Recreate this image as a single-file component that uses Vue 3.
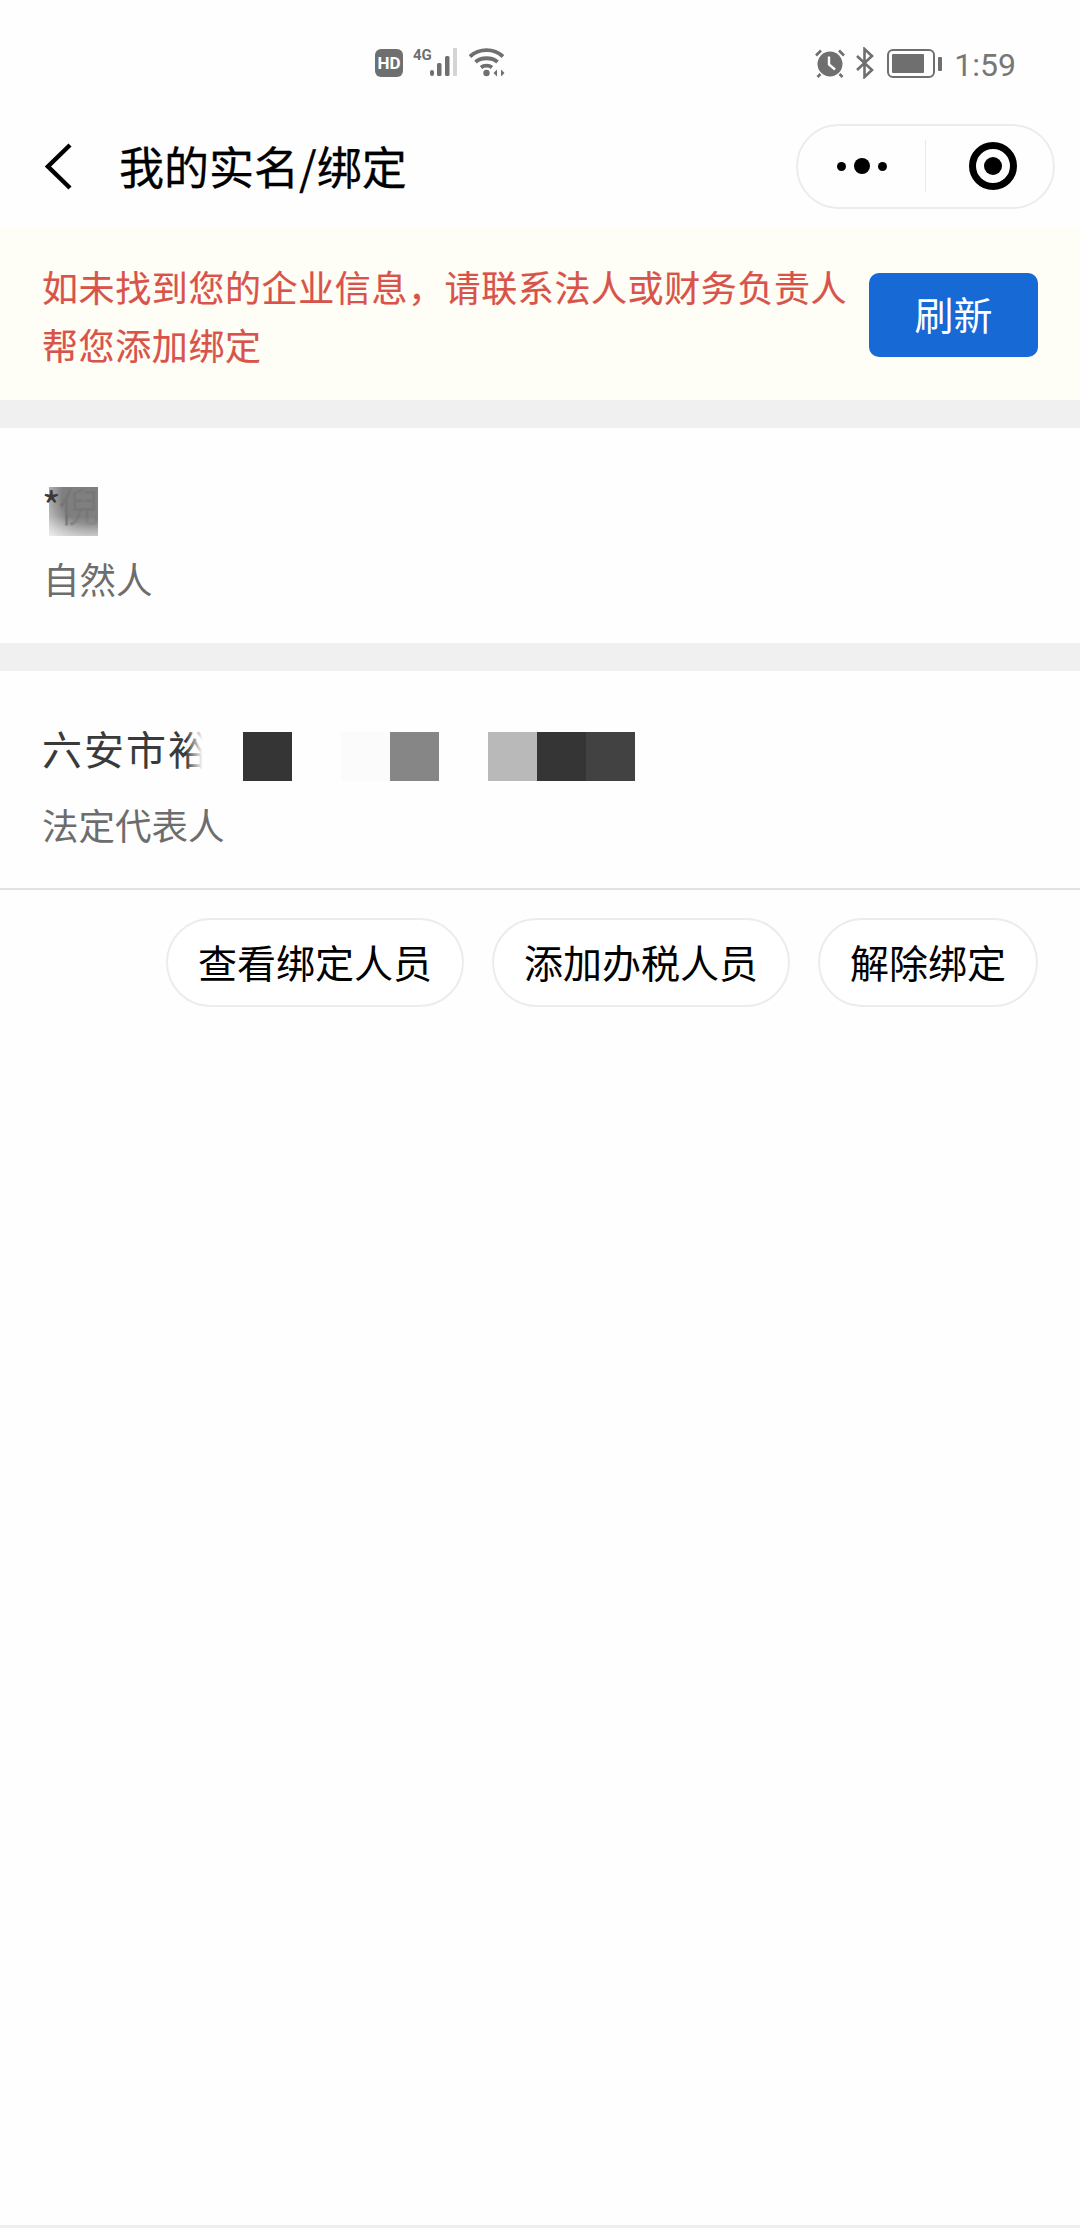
<template>
  <div class="page">
    <div class="status-bar">
      <div class="status-left">
        <span class="hd">HD</span>
        <div class="signal">
          <span class="net">4G</span>
          <svg width="32" height="30" viewBox="0 0 32 30" class="bars">
            <rect x="1" y="23" width="4" height="6" rx="2" fill="#6f6f6f" />
            <rect x="8" y="16" width="4.5" height="13" rx="1.5" fill="#6f6f6f" />
            <rect x="16" y="9" width="4.5" height="20" rx="1.5" fill="#6f6f6f" />
            <rect x="24" y="1" width="4" height="28" rx="1" fill="#d4d4d4" />
          </svg>
        </div>
        <svg class="wifi" width="38" height="30" viewBox="0 0 38 30" fill="none" stroke="#6f6f6f" stroke-width="3.8">
          <path d="M1 9.5C10 1 25 1 34 9.5" />
          <path d="M6.5 15C12 10 23 10 28.5 15" />
          <path d="M12 20.5C15 18 20 18 23 20.5" />
          <circle cx="17.5" cy="26" r="3.2" fill="#6f6f6f" stroke="none" />
          <path d="M28 22.5L24.5 26L28 29.5Z" fill="#6f6f6f" stroke="none" />
          <path d="M32 22.5L35.5 26L32 29.5Z" fill="#6f6f6f" stroke="none" />
        </svg>
      </div>
      <div class="status-right">
        <svg width="32" height="32" viewBox="0 0 32 32" class="alarm">
          <circle cx="16" cy="17" r="12.5" fill="#6f6f6f" />
          <path d="M15 9.5V17.5L21 22.5" fill="none" stroke="#fff" stroke-width="2.4" />
          <path d="M2 8.5L7 3.5M30 8.5L25 3.5M6.5 27L3.5 30M25.5 27L28.5 30" stroke="#6f6f6f" stroke-width="2.6" fill="none" />
        </svg>
        <svg width="20" height="32" viewBox="0 0 20 32" fill="none" stroke="#6f6f6f" stroke-width="2.6" class="bt">
          <path d="M2 9L17 23L9.5 30V2L17 9L2 23" />
        </svg>
        <div class="battery">
          <div class="battery-body"><div class="battery-fill"></div></div>
          <div class="battery-nub"></div>
        </div>
        <span class="time">1:59</span>
      </div>
    </div>

    <div class="nav">
      <svg class="back" width="28" height="47" viewBox="0 0 28 47" fill="none" stroke="#000" stroke-width="4.4">
        <path d="M25 2L3 23.5L25 45" />
      </svg>
      <h1 class="title">我的实名/绑定</h1>
      <div class="capsule">
        <div class="capsule-half">
          <span class="dot"></span>
          <span class="dot big"></span>
          <span class="dot"></span>
        </div>
        <div class="capsule-line"></div>
        <div class="capsule-half">
          <span class="target"></span>
        </div>
      </div>
    </div>

    <div class="notice">
      <p class="notice-text">如未找到您的企业信息，请联系法人或财务负责人帮您添加绑定</p>
      <button class="refresh">刷新</button>
    </div>

    <div class="card">
      <div class="name">
        <span class="star">*</span>
        <span>倪</span>
        <span class="blur-tile"></span>
      </div>
      <div class="role first">自然人</div>
    </div>

    <div class="card second">
      <div class="name">
        <span class="name-fade">六安市裕</span>
        <div class="mosaic">
          <span v-for="(c, i) in tiles" :key="i" class="tile" :style="{ background: c }"></span>
        </div>
      </div>
      <div class="role">法定代表人</div>
    </div>

    <div class="actions">
      <button v-for="a in actions" :key="a" class="pill">{{ a }}</button>
    </div>
  </div>
</template>

<script setup>
const tiles = [
  "#353535",
  "transparent",
  "#fbfbfb",
  "#868686",
  "transparent",
  "#b9b9b9",
  "#353535",
  "#424242",
];
const actions = ["查看绑定人员", "添加办税人员", "解除绑定"];
</script>

<style>
html,
body {
  margin: 0;
  background: #fefefe;
}
</style>

<style scoped>
.page {
  width: 1080px;
  height: 2228px;
  box-sizing: border-box;
  overflow: hidden;
  background: #fefefe;
  border-bottom: 3px solid #eeeeee;
  font-family: "Noto Sans CJK SC", "Noto Sans", sans-serif;
}
.status-bar {
  height: 104px;
  box-sizing: border-box;
  padding: 47px 64px 0 375px;
  display: flex;
  justify-content: space-between;
  align-items: flex-start;
}
.status-left,
.status-right {
  display: flex;
  align-items: flex-start;
}
.hd {
  width: 28px;
  height: 28px;
  margin-top: 2px;
  border-radius: 6px;
  background: #6f6f6f;
  color: #fff;
  font: 700 17px/28px "Roboto", sans-serif;
  text-align: center;
}
.signal {
  position: relative;
  width: 48px;
  height: 30px;
  margin-left: 10px;
}
.net {
  position: absolute;
  left: 0;
  top: 0;
  color: #6f6f6f;
  font: 700 15px/16px "Roboto", sans-serif;
}
.bars {
  position: absolute;
  left: 16px;
  top: 0;
}
.wifi {
  margin-left: 8px;
  margin-top: 0;
}
.bt {
  margin-left: 9px;
}
.battery {
  display: flex;
  align-items: center;
  margin-left: 12px;
  margin-top: 2px;
}
.battery-body {
  width: 48px;
  height: 29px;
  box-sizing: border-box;
  border: 2.5px solid #6f6f6f;
  border-radius: 6px;
  padding: 3px;
}
.battery-fill {
  width: 32px;
  height: 100%;
  background: #6f6f6f;
  border-radius: 1px;
}
.battery-nub {
  width: 4px;
  height: 14px;
  margin-left: 3px;
  background: #6f6f6f;
  border-radius: 1px;
}
.time {
  margin-left: 12px;
  color: #777;
  font: 400 32px/36px "Roboto", sans-serif;
}
.nav {
  height: 124px;
  display: flex;
  align-items: center;
  padding: 0 25px 0 45px;
}
.back {
  flex: none;
}
.title {
  margin: 0 0 0 46px;
  flex: 1;
  color: #000;
  font-size: 45px;
  font-weight: 400;
  line-height: 60px;
  -webkit-text-stroke: 0.3px #000;
}
.capsule {
  width: 259px;
  height: 85px;
  box-sizing: border-box;
  border: 2px solid #ececec;
  border-radius: 43px;
  display: flex;
  align-items: center;
}
.capsule-half {
  flex: 1;
  display: flex;
  align-items: center;
  justify-content: center;
  gap: 8px;
}
.capsule-line {
  width: 1px;
  height: 52px;
  background: #e8e8e8;
}
.dot {
  width: 9px;
  height: 9px;
  border-radius: 50%;
  background: #000;
}
.dot.big {
  width: 16px;
  height: 16px;
}
.target {
  position: relative;
  width: 48px;
  height: 48px;
  margin-left: 6px;
  box-sizing: border-box;
  border: 7px solid #000;
  border-radius: 50%;
}
.target::after {
  content: "";
  position: absolute;
  left: 8px;
  top: 8px;
  width: 18px;
  height: 18px;
  border-radius: 50%;
  background: #000;
}
.notice {
  height: 172px;
  box-sizing: border-box;
  padding: 0 42px 0 42px;
  display: flex;
  align-items: center;
  justify-content: space-between;
  background: #fffef6;
}
.notice-text {
  width: 810px;
  margin: 0;
  padding-top: 2px;
  color: #d8534a;
  font-size: 36px;
  letter-spacing: 0.6px;
  line-height: 58px;
  -webkit-text-stroke: 0.2px #d8534a;
}
.refresh {
  flex: none;
  width: 169px;
  height: 84px;
  margin-top: 2px;
  padding: 0 0 4px;
  border: 0;
  border-radius: 10px;
  background: #1769d6;
  color: #fff;
  font-family: inherit;
  font-size: 39px;
}
.card {
  height: 243px;
  box-sizing: border-box;
  padding: 50px 42px 0;
  border-top: 28px solid #f0f0f0;
}
.card.second {
  height: 247px;
  border-bottom: 2px solid #e2e2e2;
}
.name {
  position: relative;
  display: flex;
  align-items: center;
  height: 54px;
  color: #3a3a3a;
  font-size: 40px;
  line-height: 54px;
}
.star {
  position: relative;
  z-index: 1;
  margin-right: -2px;
}
.blur-tile {
  position: absolute;
  left: 7px;
  top: 9px;
  width: 49px;
  height: 49px;
  opacity: 0.96;
  background:
    linear-gradient(to bottom, rgba(254, 254, 254, 0) 60%, rgba(254, 254, 254, 0.4) 100%),
    radial-gradient(circle at 85% 20%, #7a7a7a 50%, rgba(122, 122, 122, 0.2) 100%);
}
.name-fade {
  position: relative;
  width: 168px;
  white-space: nowrap;
  letter-spacing: 2px;
}
.name-fade::after {
  content: "";
  position: absolute;
  right: 0;
  top: 0;
  bottom: 0;
  width: 24px;
  background: linear-gradient(to right, rgba(254, 254, 254, 0), #fefefe 70%);
}
.mosaic {
  display: flex;
  margin-left: 33px;
  margin-top: 16px;
}
.tile {
  width: 49px;
  height: 49px;
}
.role {
  margin-top: 24px;
  color: #6d6d6d;
  font-size: 36.5px;
  line-height: 52px;
}
.role.first {
  margin-top: 21px;
  padding-left: 1px;
}
.actions {
  display: flex;
  justify-content: flex-end;
  gap: 28px;
  padding: 28px 42px 0 0;
}
.pill {
  height: 89px;
  padding: 0 30px 3px;
  box-sizing: border-box;
  border: 2px solid #ececec;
  border-radius: 45px;
  background: #fff;
  color: #000;
  font-family: inherit;
  font-size: 39px;
  white-space: nowrap;
}
</style>
